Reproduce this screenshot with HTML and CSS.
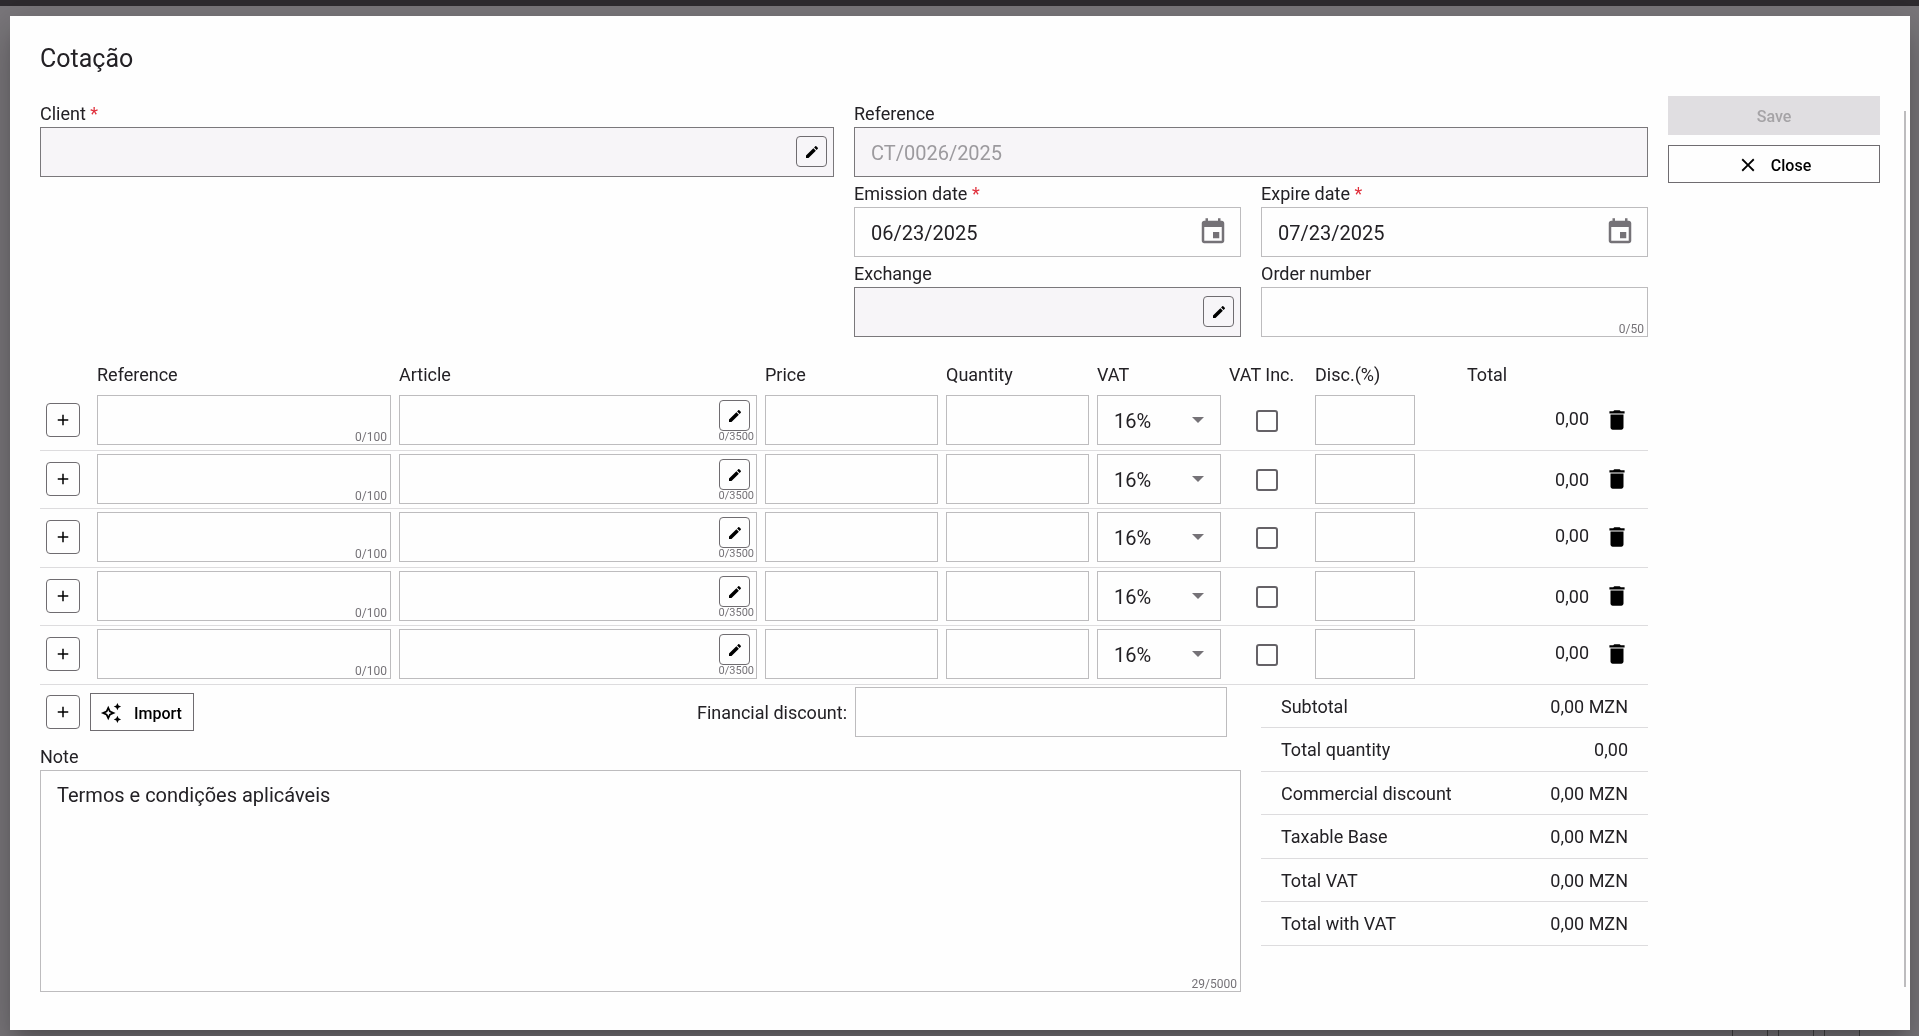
FILE: index.html
```html
<!DOCTYPE html>
<html lang="en">
<head>
  <meta charset="UTF-8">
  <title>Cotação</title>
  <link rel="stylesheet" href="styles.css">
</head>
<body>

  <!-- Icons shared by the form -->
  <svg class="sprite" aria-hidden="true">
    <symbol id="icon-edit" viewBox="0 0 24 24">
      <path d="M3 17.25V21h3.75L17.81 9.94l-3.75-3.75L3 17.25zM20.71 7.04c.39-.39.39-1.02 0-1.41l-2.34-2.34c-.39-.39-1.02-.39-1.41 0l-1.83 1.83 3.75 3.75 1.83-1.83z"/>
    </symbol>
    <symbol id="icon-event" viewBox="0 0 24 24">
      <path d="M17 12h-5v5h5v-5zM16 1v2H8V1H6v2H5c-1.11 0-1.99.9-1.99 2L3 19c0 1.1.89 2 2 2h14c1.1 0 2-.9 2-2V5c0-1.1-.9-2-2-2h-1V1h-2zm3 18H5V8h14v11z"/>
    </symbol>
    <symbol id="icon-add" viewBox="0 0 24 24">
      <path d="M19 13h-6v6h-2v-6H5v-2h6V5h2v6h6v2z"/>
    </symbol>
    <symbol id="icon-delete" viewBox="0 0 24 24">
      <path d="M6 19c0 1.1.9 2 2 2h8c1.1 0 2-.9 2-2V7H6v12zM19 4h-3.500l-1-1h-5l-1 1H5v2h14V4z"/>
    </symbol>
    <symbol id="icon-close" viewBox="0 0 24 24">
      <path d="M19 6.410L17.590 5 12 10.590 6.410 5 5 6.410 10.590 12 5 17.590 6.410 19 12 13.410 17.590 19 19 17.590 13.410 12z"/>
    </symbol>
    <symbol id="icon-sparkle" viewBox="0 0 24 24">
      <path d="M19 9l1.250-2.750L23 5l-2.750-1.250L19 1l-1.250 2.750L15 5l2.750 1.250L19 9zM19 15l-1.250 2.750L15 19l2.750 1.250L19 23l1.250-2.750L23 19l-2.750-1.250L19 15zM11.500 9.500L9 4 6.500 9.500 1 12l5.500 2.500L9 20l2.500-5.500L17 12l-5.500-2.500zM9.990 12.990L9 15.170l-.99-2.180L5.830 12l2.180-.99L9 8.830l.99 2.180 2.180.99-2.180.99z"/>
    </symbol>
  </svg>

  <div class="page">
    <div class="page-bar"></div>
    <div class="page-footer">
      <span class="page-box"></span>
      <span class="page-box"></span>
      <span class="page-box"></span>
    </div>
  </div>

  <div class="backdrop">
    <div class="dialog" role="dialog" aria-labelledby="dialog-title">
      <h1 class="dialog-title" id="dialog-title">Cotação</h1>
      <div class="scrollbar"></div>

      <div class="dialog-body">
        <form class="quote-form">
          <div class="fields">
            <div class="field field-client">
              <label for="client">Client <span class="required">*</span></label>
              <div class="control">
                <input class="input readonly" id="client" type="text" readonly>
                <button class="edit-btn" type="button" aria-label="Edit client"><svg><use href="#icon-edit"/></svg></button>
              </div>
            </div>
            <div class="field field-reference">
              <label for="reference">Reference</label>
              <input class="input readonly" id="reference" type="text" placeholder="CT/0026/2025" readonly>
            </div>
            <div class="field field-emission">
              <label for="emission">Emission date <span class="required">*</span></label>
              <div class="control">
                <input class="input" id="emission" type="text" value="06/23/2025">
                <button class="date-btn" type="button" aria-label="Open calendar"><svg><use href="#icon-event"/></svg></button>
              </div>
            </div>
            <div class="field">
              <label for="expire">Expire date <span class="required">*</span></label>
              <div class="control">
                <input class="input" id="expire" type="text" value="07/23/2025">
                <button class="date-btn" type="button" aria-label="Open calendar"><svg><use href="#icon-event"/></svg></button>
              </div>
            </div>
            <div class="field field-exchange">
              <label for="exchange">Exchange</label>
              <div class="control">
                <input class="input readonly" id="exchange" type="text" readonly>
                <button class="edit-btn" type="button" aria-label="Edit exchange"><svg><use href="#icon-edit"/></svg></button>
              </div>
            </div>
            <div class="field">
              <label for="order">Order number</label>
              <div class="control">
                <input class="input" id="order" type="text" maxlength="50">
                <span class="counter">0/50</span>
              </div>
            </div>
          </div>

          <table class="lines">
            <colgroup>
              <col class="col-add">
              <col class="col-reference">
              <col class="col-article">
              <col class="col-price">
              <col class="col-quantity">
              <col class="col-vat">
              <col class="col-vat-inc">
              <col class="col-disc">
              <col class="col-total">
              <col class="col-delete">
            </colgroup>
            <thead>
              <tr>
                <th></th>
                <th>Reference</th>
                <th>Article</th>
                <th>Price</th>
                <th>Quantity</th>
                <th>VAT</th>
                <th>VAT Inc.</th>
                <th>Disc.(%)</th>
                <th class="total-head">Total</th>
                <th></th>
              </tr>
            </thead>
            <tbody id="lines-body"></tbody>
          </table>

          <div class="bottom">
            <div class="bottom-left">
              <div class="actions">
                <button class="add-btn" type="button" aria-label="Add line"><svg><use href="#icon-add"/></svg></button>
                <button class="btn import-btn" type="button"><svg><use href="#icon-sparkle"/></svg>Import</button>
                <label class="discount-label" for="discount">Financial discount:</label>
                <input class="input discount-input" id="discount" type="text">
              </div>
              <div class="field note">
                <label for="note">Note</label>
                <div class="control">
                  <textarea class="input" id="note" maxlength="5000">Termos e condições aplicáveis</textarea>
                  <span class="counter">29/5000</span>
                </div>
              </div>
            </div>

            <table class="totals">
              <tr><th>Subtotal</th><td>0,00 MZN</td></tr>
              <tr><th>Total quantity</th><td>0,00</td></tr>
              <tr><th>Commercial discount</th><td>0,00 MZN</td></tr>
              <tr><th>Taxable Base</th><td>0,00 MZN</td></tr>
              <tr><th>Total VAT</th><td>0,00 MZN</td></tr>
              <tr><th>Total with VAT</th><td>0,00 MZN</td></tr>
            </table>
          </div>
        </form>

        <div class="side">
          <button class="btn save-btn" type="button" disabled>Save</button>
          <button class="btn close-btn" type="button"><svg><use href="#icon-close"/></svg>Close</button>
        </div>
      </div>
    </div>
  </div>

  <script>
    const linesBody = document.getElementById('lines-body');
    const lineCount = 5;

    // Create the empty quote lines
    for (let i = 0; i < lineCount; i++) {
      const row = document.createElement('tr');
      row.innerHTML = `
        <td class="add-cell"><button class="add-btn" type="button" aria-label="Insert line"><svg><use href="#icon-add"/></svg></button></td>
        <td>
          <div class="control">
            <input class="input" type="text" maxlength="100" aria-label="Reference">
            <span class="counter">0/100</span>
          </div>
        </td>
        <td>
          <div class="control article">
            <input class="input" type="text" maxlength="3500" aria-label="Article">
            <button class="edit-btn" type="button" aria-label="Edit article"><svg><use href="#icon-edit"/></svg></button>
            <span class="counter">0/3500</span>
          </div>
        </td>
        <td><input class="input" type="text" aria-label="Price"></td>
        <td><input class="input" type="text" aria-label="Quantity"></td>
        <td>
          <div class="control">
            <select class="input" aria-label="VAT"><option>16%</option></select>
            <span class="arrow"></span>
          </div>
        </td>
        <td class="check-cell"><input class="checkbox" type="checkbox" aria-label="VAT included"></td>
        <td><input class="input" type="text" aria-label="Discount"></td>
        <td class="amount">0,00</td>
        <td class="delete-cell"><button class="delete-btn" type="button" aria-label="Delete line"><svg><use href="#icon-delete"/></svg></button></td>
      `;
      linesBody.appendChild(row);
    }
  </script>
</body>
</html>
```
FILE: styles.css
```css
* {
  box-sizing: border-box;
}

body {
  margin: 0;
  font-family: Roboto, "Open Sans", sans-serif;
  font-size: 18px;
  color: #232125;
  background: #7a777b;
}

button {
  padding: 0;
  font-family: inherit;
  color: #000;
  background: none;
  border: none;
  cursor: pointer;
}

svg {
  display: block;
  fill: currentColor;
}

.sprite {
  display: none;
}

/* Page behind the dialog */
.page {
  display: flex;
  flex-direction: column;
  justify-content: space-between;
  height: 100vh;
}

.page-bar {
  height: 6px;
  background: #2e2b2f;
}

.page-footer {
  display: flex;
  justify-content: flex-end;
  gap: 10px;
  padding-right: 59px;
}

.page-box {
  width: 36px;
  height: 20px;
  border: 1px solid #444;
  border-bottom: none;
}

.backdrop {
  position: fixed;
  inset: 0;
  display: flex;
  padding: 16px 9px 6px 10px;
}

.dialog {
  position: relative;
  flex: 1;
  padding: 28px 30px 38px;
  background: #fefefe;
  box-shadow: 0 11px 15px -7px rgba(0, 0, 0, 0.2), 0 24px 38px 3px rgba(0, 0, 0, 0.14), 0 9px 46px 8px rgba(0, 0, 0, 0.12);
}

.dialog-title {
  margin: 0 0 22px;
  font-size: 25px;
  font-weight: 400;
  line-height: 30px;
}

.dialog-body {
  display: flex;
  gap: 20px;
}

.scrollbar {
  position: absolute;
  top: 95px;
  right: 4px;
  bottom: 43px;
  width: 2px;
  background: #bdbcbe;
}

/* Fields */
.quote-form {
  flex: 1;
  min-width: 0;
  padding-top: 1px;
}

.fields {
  display: grid;
  grid-template-columns: repeat(4, 1fr);
  column-gap: 20px;
}

.field-client,
.field-reference {
  grid-column: span 2;
}

.field-emission,
.field-exchange {
  grid-column: 3;
}

.field label {
  display: block;
  padding-top: 4px;
  line-height: 26px;
}

.required {
  color: #e0303c;
}

.control {
  position: relative;
}

.input {
  display: block;
  width: 100%;
  height: 50px;
  padding: 2px 16px 0;
  font-family: inherit;
  font-size: 20px;
  color: #232125;
  background: #fefefe;
  border: 1px solid #bdbcbe;
  border-radius: 0;
  appearance: none;
}

.input::placeholder {
  color: #9c9a9e;
}

.input.readonly {
  background: #f7f5f8;
  border-color: #7a787b;
}

.edit-btn {
  position: absolute;
  top: 9px;
  right: 7px;
  display: grid;
  place-items: center;
  width: 31px;
  height: 31px;
  border: 1px solid #6f6c70;
  border-radius: 4px;
}

.edit-btn svg {
  width: 16px;
  height: 16px;
}

.date-btn {
  position: absolute;
  top: 10px;
  right: 13px;
  color: #757277;
}

.date-btn svg {
  width: 30px;
  height: 30px;
}

.counter {
  position: absolute;
  right: 4px;
  bottom: 1px;
  font-size: 12px;
  line-height: 14px;
  color: #757277;
}

/* Quote lines */
.lines {
  width: 100%;
  margin-top: 20px;
  table-layout: fixed;
  border-collapse: separate;
  border-spacing: 0;
}

.col-add { width: 53px; }
.col-reference { width: 302px; }
.col-price { width: 181px; }
.col-quantity { width: 151px; }
.col-vat { width: 132px; }
.col-vat-inc { width: 86px; }
.col-disc { width: 108px; }
.col-total { width: 174px; }
.col-delete { width: 55px; }

.lines th {
  height: 35px;
  padding: 0 4px;
  font-weight: 400;
  text-align: left;
}

.lines .total-head {
  padding-left: 48px;
}

.lines td {
  height: 59px;
  padding: 3px 4px 5px;
  border-bottom: 1px solid #dddcde;
}

.lines tr:nth-child(even) td {
  height: 58px;
  padding-bottom: 4px;
}

.lines .add-cell {
  padding-left: 6px;
}

.lines .check-cell {
  padding-left: 31px;
}

.lines .amount {
  padding-bottom: 8px;
  text-align: right;
}

.lines .delete-cell {
  padding-left: 11px;
}

.article .edit-btn {
  top: 5px;
}

.article .counter {
  right: 3px;
  font-size: 11px;
}

.add-btn {
  display: grid;
  place-items: center;
  width: 34px;
  height: 34px;
  border: 1px solid #6f6c70;
  border-radius: 4px;
}

.add-btn svg {
  width: 18px;
  height: 18px;
}

.arrow {
  position: absolute;
  top: 22px;
  right: 17px;
  border: 6px solid transparent;
  border-top-color: #757277;
  border-bottom: none;
  pointer-events: none;
}

.checkbox {
  display: block;
  width: 22px;
  height: 22px;
  margin: 2px 0 0;
  border: 2px solid #656267;
  border-radius: 3px;
  appearance: none;
}

.delete-btn {
  display: block;
}

.delete-btn svg {
  width: 26px;
  height: 26px;
}

/* Actions, note and totals */
.bottom {
  display: grid;
  grid-template-columns: repeat(4, 1fr);
  column-gap: 20px;
  align-items: start;
}

.bottom-left {
  grid-column: span 3;
}

.actions {
  display: flex;
  align-items: center;
  padding: 2px 14px 3px 6px;
}

.btn {
  display: flex;
  align-items: center;
  justify-content: center;
  gap: 12px;
  height: 38px;
  padding-top: 2px;
  font-size: 16px;
  font-weight: 500;
  border: 1px solid #6f6c70;
}

.btn svg {
  width: 22px;
  height: 22px;
}

.import-btn {
  margin-left: 10px;
  padding: 2px 11px 0 9px;
}

.discount-label {
  margin-left: auto;
}

.discount-input {
  width: 372px;
  margin-left: 8px;
}

.note textarea {
  height: 222px;
  padding: 10px 16px;
  line-height: 28px;
  resize: none;
}

.totals {
  width: 100%;
  border-spacing: 0;
}

.totals th,
.totals td {
  height: 43px;
  padding: 0 20px;
  font-weight: 400;
  text-align: left;
  border-bottom: 1px solid #dddcde;
}

.totals tr:nth-child(even) > * {
  height: 44px;
}

.totals td {
  text-align: right;
}

/* Side buttons */
.side {
  display: flex;
  flex-direction: column;
  gap: 10px;
  width: 212px;
}

.save-btn {
  height: 39px;
  color: #a5a3a6;
  background: #e0dee1;
  border-color: #e0dee1;
  cursor: default;
}
```
